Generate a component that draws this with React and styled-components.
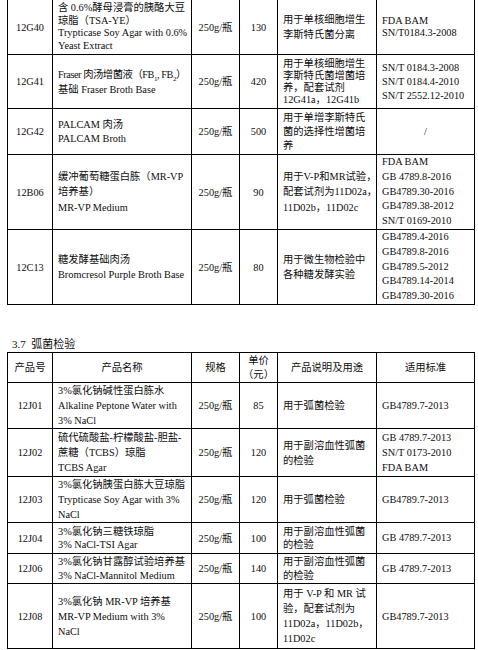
import React from 'react';
import styled, { createGlobalStyle } from 'styled-components';

const GlobalStyle = createGlobalStyle`
  html, body {
    margin: 0;
    padding: 0;
    background: #fff;
  }
  body {
    font-family: "Liberation Serif", "Noto Sans CJK SC", serif;
    color: #0d0d0d;
    overflow: hidden;
  }
`;

const Page = styled.div`
  width: 478px;
  height: 650px;
  overflow: hidden;
  padding-left: 7px;
  box-sizing: border-box;
`;

const Table = styled.table`
  border-collapse: collapse;
  table-layout: fixed;
  width: 467px;
  margin-top: ${props => props.$top || 0}px;
  font-size: 10.3px;
`;

const Row = styled.tr`
  height: ${props => props.$h}px;
`;

const Cell = styled.td`
  border: 1px solid #000;
  padding: 0 3px 0 ${props => (props.$align === 'center' ? 3 : 5)}px;
  text-align: ${props => props.$align || 'left'};
  vertical-align: middle;
  line-height: ${props => props.$lh || 15}px;
  box-sizing: border-box;
  overflow: hidden;

  sub {
    font-size: 7px;
    line-height: 0;
  }
`;

const Line = styled.div`
  white-space: nowrap;
  letter-spacing: ${props => (props.$tight ? '-0.45px' : 'normal')};
`;

const SectionTitle = styled.div`
  font-size: 11px;
  line-height: 14px;
  margin: 32px 0 1px 5px;
`;

const Cols = () => (
  <colgroup>
    <col style={{ width: 45 }} />
    <col style={{ width: 139 }} />
    <col style={{ width: 48 }} />
    <col style={{ width: 38 }} />
    <col style={{ width: 99 }} />
    <col style={{ width: 98 }} />
  </colgroup>
);

const Lines = ({ items }) =>
  items.map((t, i) =>
    t && t.tight ? (
      <Line key={i} $tight>{t.text}</Line>
    ) : (
      <Line key={i}>{t}</Line>
    )
  );

const listeria = [
  {
    code: '12G40',
    name: ['含 0.6%酵母浸膏的胰酪大豆', '琼脂（TSA-YE）', 'Trypticase Soy Agar with 0.6%', 'Yeast Extract'],
    price: '130',
    use: ['用于单核细胞增生', '李斯特氏菌分离'],
    std: ['FDA BAM', 'SN/T0184.3-2008'],
    h: 55,
    lh: 12.5,
    useLh: 15,
  },
  {
    code: '12G41',
    name: [
      { tight: true, text: <>Fraser 肉汤增菌液（FB<sub>1</sub>, FB<sub>2</sub>）</> },
      '基础 Fraser Broth Base',
    ],
    price: '420',
    use: ['用于单核细胞增生', '李斯特氏菌增菌培', '养，配套试剂', '12G41a，12G41b'],
    std: ['SN/T 0184.3-2008', 'SN/T 0184.4-2010', 'SN/T 2552.12-2010'],
    h: 54,
    lh: 15,
    useLh: 12,
    stdLh: 14,
  },
  {
    code: '12G42',
    name: ['PALCAM 肉汤', 'PALCAM Broth'],
    price: '500',
    use: ['用于单增李斯特氏', '菌的选择性增菌培', '养'],
    std: ['/'],
    stdCenter: true,
    h: 46,
    lh: 14,
  },
  {
    code: '12B06',
    name: ['缓冲葡萄糖蛋白胨（MR-VP', '培养基）', 'MR-VP Medium'],
    price: '90',
    use: ['用于V-P和MR试验，', '配套试剂为11D02a，', '11D02b，11D02c'],
    std: ['FDA BAM', 'GB 4789.8-2016', 'GB4789.30-2016', 'GB4789.38-2012', 'SN/T 0169-2010'],
    h: 75,
    lh: 15.5,
    stdLh: 14.8,
  },
  {
    code: '12C13',
    name: ['糖发酵基础肉汤', 'Bromcresol Purple Broth Base'],
    price: '80',
    use: ['用于微生物检验中', '各种糖发酵实验'],
    std: ['GB4789.4-2016', 'GB4789.8-2016', 'GB4789.5-2012', 'GB4789.14-2014', 'GB4789.30-2016'],
    h: 75,
    lh: 15,
    stdLh: 14.8,
  },
];

const vibrio = [
  {
    code: '12J01',
    name: ['3%氯化钠碱性蛋白胨水', 'Alkaline Peptone Water with', '3% NaCl'],
    price: '85',
    use: ['用于弧菌检验'],
    std: ['GB4789.7-2013'],
    h: 46,
    lh: 15,
  },
  {
    code: '12J02',
    name: ['硫代硫酸盐-柠檬酸盐-胆盐-', '蔗糖（TCBS）琼脂', 'TCBS Agar'],
    price: '120',
    use: ['用于副溶血性弧菌', '的检验'],
    std: ['GB 4789.7-2013', 'SN/T 0173-2010', 'FDA BAM'],
    h: 48,
    lh: 15,
  },
  {
    code: '12J03',
    name: ['3%氯化钠胰蛋白胨大豆琼脂', 'Trypticase Soy Agar with 3%', 'NaCl'],
    price: '120',
    use: ['用于弧菌检验'],
    std: ['GB4789.7-2013'],
    h: 45,
    lh: 15,
  },
  {
    code: '12J04',
    name: ['3%氯化钠三糖铁琼脂', '3% NaCl-TSI Agar'],
    price: '100',
    use: ['用于副溶血性弧菌', '的检验'],
    std: ['GB 4789.7-2013'],
    h: 31,
    lh: 13.5,
  },
  {
    code: '12J06',
    name: ['3%氯化钠甘露醇试验培养基', '3% NaCl-Mannitol Medium'],
    price: '140',
    use: ['用于副溶血性弧菌', '的检验'],
    std: ['GB 4789.7-2013'],
    h: 30,
    lh: 14,
  },
  {
    code: '12J08',
    name: ['3%氯化钠 MR-VP 培养基', 'MR-VP Medium with 3%', 'NaCl'],
    price: '100',
    use: ['用于 V-P 和 MR 试', '验，配套试剂为', '11D02a，11D02b，', '11D02c'],
    std: ['GB4789.7-2013'],
    h: 65,
    lh: 15,
  },
];

const ProductRow = ({ item }) => (
  <Row $h={item.h}>
    <Cell $align="center">{item.code}</Cell>
    <Cell $lh={item.lh}><Lines items={item.name} /></Cell>
    <Cell $align="center">250g/瓶</Cell>
    <Cell $align="center">{item.price}</Cell>
    <Cell $lh={item.useLh || item.lh}><Lines items={item.use} /></Cell>
    <Cell $lh={item.stdLh || item.lh} $align={item.stdCenter ? 'center' : 'left'}>
      <Lines items={item.std} />
    </Cell>
  </Row>
);

export default function App() {
  return (
    <Page>
      <GlobalStyle />
      <Table $top={-1}>
        <Cols />
        <tbody>
          {listeria.map(item => <ProductRow key={item.code} item={item} />)}
        </tbody>
      </Table>

      <SectionTitle>3.7&nbsp;&nbsp;弧菌检验</SectionTitle>

      <Table>
        <Cols />
        <tbody>
          <Row $h={30}>
            <Cell $align="center">产品号</Cell>
            <Cell $align="center">产品名称</Cell>
            <Cell $align="center">规格</Cell>
            <Cell $align="center" $lh={14}>
              <Line>单价</Line>
              <Line>（元）</Line>
            </Cell>
            <Cell $align="center">产品说明及用途</Cell>
            <Cell $align="center">适用标准</Cell>
          </Row>
          {vibrio.map(item => <ProductRow key={item.code} item={item} />)}
        </tbody>
      </Table>
    </Page>
  );
}
